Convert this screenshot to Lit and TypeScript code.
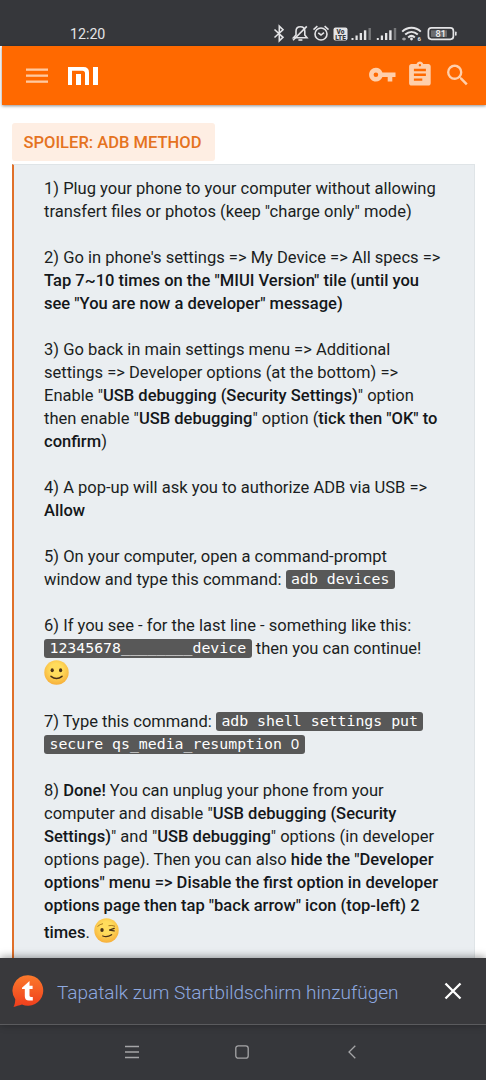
import { LitElement, html, css, svg } from "lit";
import { customElement, property } from "lit/decorators.js";

const ico = (w: number, h: number, body: unknown, vb = `0 0 ${w} ${h}`) =>
  html`<svg width=${w} height=${h} viewBox=${vb} fill="none">${body}</svg>`;

@customElement("status-bar")
class StatusBar extends LitElement {
  static styles = css`
    :host { display: flex; justify-content: space-between; height: 46px; box-sizing: border-box;
      padding: 24px 27px 0 70px; background: #36373b; color: #e4e4e6; font-size: 14.2px; line-height: 21px; }
    .icons { display: flex; height: 20px; }
    svg { display: block; }
    text { font-family: Roboto, sans-serif; }
  `;
  signal() {
    return svg`<g fill="#e4e4e6"><rect x="0" y="14" width="2" height="2"/><rect x="4" y="11.5" width="2.2" height="4.5"/><rect x="8.2" y="9" width="2.3" height="7"/><rect x="12.4" y="6.3" width="2.4" height="9.7"/><rect x="17" y="4" width="2.4" height="12" fill="#77787b"/></g>`;
  }
  render() {
    return html`<span>12:20</span>
      <div class="icons">${ico(186, 20, svg`
        <path d="M1.5 5.500 10 13.300 6.300 16.900V2.100L10 5.800 1.500 13.500" stroke="#e4e4e6" stroke-width="1.600"/>
        <g stroke="#e4e4e6" stroke-width="1.600">
          <path d="M20.500 13.800h13.500l-2.200-2.800V7.200c0-3-2-4.400-4.400-4.400s-4.400 1.400-4.400 4.400V11z"/>
          <path d="M20 16.200 33.800 2.400"/><path d="M25.400 16h4"/>
          <circle cx="48" cy="10" r="6"/><path d="M45.200 8.800 48 11l3-2.400M40.500 5.600 44.400 2.200M55.500 5.600 51.600 2.200"/>
        </g>
        <rect x="60.500" y="3.500" width="14" height="13" rx="2" fill="#e4e4e6"/>
        <text x="67.500" y="9.500" font-size="6.500" font-weight="900" text-anchor="middle" fill="#36373b">Vo</text>
        <text x="67.500" y="15.500" font-size="6.500" font-weight="900" text-anchor="middle" fill="#36373b">LTE</text>
        <g transform="translate(78.500 0)">${this.signal()}</g>
        <g transform="translate(103.800 0)">${this.signal()}</g>
        <g stroke="#e4e4e6" stroke-width="2">
          <path d="M129.200 7.600c5.400-5.200 13.200-5.200 18.600 0M132.200 10.600c3.800-3.400 8.800-3.400 12.600 0M135.200 13.400c2-1.800 4.600-1.800 6.600 0"/>
        </g>
        <circle cx="138.500" cy="15" r="1.400" fill="#e4e4e6"/>
        <path d="M129 15h4M131 13.500v3" stroke="#c4c4c6"/>
        <text x="144.500" y="17" font-size="6" font-weight="700" fill="#e4e4e6">6</text>
        <rect x="155.400" y="3.900" width="25" height="11.400" rx="3" stroke="#e4e4e6" stroke-width="1.700"/>
        <rect x="158" y="6.300" width="16" height="6.600" fill="#6b6c6f"/>
        <rect x="182" y="7.400" width="1.600" height="4.400" rx=".8" fill="#e4e4e6"/>
        <text x="167.700" y="12.900" font-size="9.200" font-weight="500" text-anchor="middle" fill="#f0f0f0">81</text>
      `)}</div>`;
  }
}

@customElement("nav-header")
class NavHeader extends LitElement {
  static styles = css`
    :host { display: flex; align-items: center; height: 59px; margin-left: 2px; padding: 0 17px 0 24px;
      background: #ff6900; box-sizing: border-box; box-shadow: 0 1px 3px rgba(0, 0, 0, .45); }
    svg { display: block; }
    .logo { margin-left: 20px; }
    .grow { flex: 1; }
    .tools { padding-bottom: 3px; }
  `;
  render() {
    return html`${ico(22, 16, svg`<g fill="#ffc9a0"><rect y=".5" width="22" height="2.300"/><rect y="6.500" width="22" height="2.300"/><rect y="12.500" width="22" height="2.300"/></g>`)}
      <div class="logo">${ico(31, 18, svg`<g fill="#fff"><path d="M0 0h15.500q5.500 0 5.500 5.500V18h-4V6.300q0-2.600-2.600-2.600H4V18H0z"/><rect x="8" y="7" width="5" height="11"/><rect x="25" width="5" height="18"/></g>`)}</div>
      <span class="grow"></span>
      <div class="tools">${ico(100, 28, svg`
        <path fill="#ffcfab" d="M13.400 12.400C12.500 9.700 9.900 7.800 6.900 7.800 3.100 7.800.1 10.900.1 14.700s3 6.900 6.800 6.900c3 0 5.500-1.900 6.500-4.600h5.300v4.500h4.600V17H26.500v-4.600zM6.900 17a2.300 2.300 0 1 1 0-4.600 2.300 2.300 0 0 1 0 4.600z"/>
        <path fill="#ffcfab" transform="translate(36.500 .4) scale(1.200)" d="M19 3h-4.180C14.400 1.840 13.300 1 12 1c-1.300 0-2.400.84-2.820 2H5c-1.100 0-2 .9-2 2v14c0 1.100.9 2 2 2h14c1.100 0 2-.9 2-2V5c0-1.100-.9-2-2-2zm-7 0c.55 0 1 .45 1 1s-.45 1-1 1-1-.45-1-1 .45-1 1-1zm2 14H7v-2h7v2zm3-4H7v-2h10v2zm0-4H7V7h10v2z"/>
        <path fill="#ffcfab" transform="translate(74.500 1) scale(1.180)" d="M15.500 14h-.79l-.28-.27A6.471 6.471 0 0 0 16 9.500 6.500 6.500 0 1 0 9.500 16c1.610 0 3.090-.59 4.230-1.570l.27.28v.79l5 4.990L20.490 19l-4.990-5zm-6 0C7.010 14 5 11.990 5 9.500S7.010 5 9.500 5 14 7.010 14 9.500 11.990 14 9.500 14z"/>
      `)}</div>`;
  }
}

@customElement("emoji-face")
class EmojiFace extends LitElement {
  @property({ type: Boolean }) wink = false;
  static styles = css`
    :host { display: inline-block; width: 25px; height: 25px; vertical-align: -5px; }
    svg { display: block; }
  `;
  render() {
    return ico(25, 25, svg`
      <defs><radialGradient id="g" cx=".5" cy=".38" r=".62"><stop offset=".4" stop-color="#ffdc5c"/><stop offset="1" stop-color="#f7b03b"/></radialGradient></defs>
      <circle cx="12.500" cy="12.500" r="12.200" fill="url(#g)"/>
      ${this.wink
        ? svg`<ellipse cx="8" cy="12" rx="1.700" ry="1.900" fill="#493018"/><path d="M3.500 8.500q2.500-2.300 5.500-2.800M14.500 7.700q3.500-.8 6.500.6" stroke="#a0701c" stroke-width=".9"/><path d="M20.200 10.300l-5 1.900 5 .7M8.800 18q4.500 1.600 8.800-1.300" stroke="#493018" stroke-width="1.300" stroke-linecap="round"/>`
        : svg`<ellipse cx="8.200" cy="10.200" rx="1.600" ry="2" fill="#493018"/><ellipse cx="16.600" cy="10.200" rx="1.600" ry="2" fill="#493018"/><path d="M7 16.300q5.500 4.400 11 0" stroke="#493018" stroke-width="1.500" stroke-linecap="round"/>`}`);
  }
}

@customElement("install-banner")
class InstallBanner extends LitElement {
  static styles = css`
    :host { display: flex; align-items: center; height: 67px; box-sizing: border-box; padding: 0 24px 0 12px;
      background: #39393c; border-bottom: 1px solid #5b5b5e; box-shadow: 0 -1px 8px rgba(0, 0, 0, .4); position: relative; }
    svg { display: block; }
    .label { flex: 1; margin-left: 13px; font-size: 19px; font-weight: 300; color: #8ea9e0; white-space: nowrap; padding-top: 2px; }
  `;
  render() {
    return html`${ico(32, 34, svg`
        <defs><linearGradient id="t" x1="0" y1="0" x2="0" y2="1"><stop stop-color="#fb7a2c"/><stop offset="1" stop-color="#ef3d1c"/></linearGradient></defs>
        <path fill="url(#t)" d="M16.300 1.200a15.300 15.300 0 1 1-6.300 29.400C7 31.500 4 32.500 1.500 33c1-2 1.700-4.500 1.800-7.800A15.300 15.300 0 0 1 16.300 1.200z"/>
        <path fill="#fff" d="M17.500 7v4.800h3.100v3.200h-3.100v6.500q0 1.400 1.400 1.400h1.900v3.500h-3.900q-4.100 0-4.100-4.200V15H10v-1.200z"/>`)}
      <span class="label">Tapatalk zum Startbildschirm hinzufügen</span>
      ${ico(18, 18, svg`<path d="M1.500 1.500l15 15M16.500 1.500l-15 15" stroke="#fff" stroke-width="2.300"/>`)}`;
  }
}

@customElement("system-nav")
class SystemNav extends LitElement {
  static styles = css`
    :host { display: flex; align-items: center; height: 55px; box-sizing: border-box;
      padding: 0 0 1px 125px; background: #36373b; }
    svg { display: block; }
    .home { margin: 0 99.500px 0 95.500px; }
  `;
  render() {
    return html`${ico(14, 14, svg`<path d="M0 1.500h14M0 7h14M0 12.500h14" stroke="#a5a5a7" stroke-width="1.300"/>`)}
      <div class="home">${ico(14, 14, svg`<rect x=".8" y=".8" width="12.400" height="12.400" rx="2.500" stroke="#a5a5a7" stroke-width="1.300"/>`)}</div>
      ${ico(8, 14, svg`<path d="M7.300.7 1 7l6.300 6.300" stroke="#a5a5a7" stroke-width="1.300"/>`)}`;
  }
}

@customElement("app-root")
class AppRoot extends LitElement {
  static styles = css`
    :host { display: flex; flex-direction: column; height: 1080px; overflow: hidden; background: #fff;
      font-family: Roboto, sans-serif; color: #1b1e22; }
    status-bar, nav-header, install-banner, system-nav { flex: none; }
    main { flex: 1; min-height: 0; overflow: hidden; padding: 18px 11px 0 12px; }
    .tab { display: flex; width: 203px; height: 38px; align-items: center; justify-content: center; box-sizing: border-box;
      background: #feeee3; border-radius: 3px; color: #e5731f; font-size: 16.550px; font-weight: 500; white-space: nowrap; padding-right: 2px; }
    .card { margin-top: 3px; height: 820px; box-sizing: border-box; padding: 12px 0 0 30px; background: #eaeef1;
      border: 1px solid #dfe4e7; border-left: 2px solid #e0702a; font-size: 16.540px; line-height: 23px; }
    .p { margin-bottom: 23px; white-space: nowrap; }
    .l { height: 23px; }
    .l.face { height: 27px; }
    .l.wink { height: 32px; line-height: 32px; }
    b { font-weight: 500; color: #14171a; }
    code { display: inline-block; height: 19px; line-height: 18px; padding: 0 5.500px; border-radius: 3px; background: #585858;
      color: #fff; font-family: "DejaVu Sans Mono", monospace; font-size: 14.850px; vertical-align: top; margin-top: 2px; }
    .zero { font-family: "Noto Sans", sans-serif; line-height: 1; }
    .blank { position: relative; top: -1px; }
  `;
  render() {
    return html`<status-bar></status-bar><nav-header></nav-header>
      <main>
        <div class="tab">SPOILER: ADB METHOD</div>
        <div class="card">
          <div class="p"><div class="l">1) Plug your phone to your computer without allowing</div>
            <div class="l">transfert files or photos (keep "charge only" mode)</div></div>
          <div class="p"><div class="l">2) Go in phone's settings =&gt; My Device =&gt; All specs =&gt;</div>
            <div class="l"><b>Tap 7~10 times on the "MIUI Version" tile (until you</b></div>
            <div class="l"><b>see "You are now a developer" message)</b></div></div>
          <div class="p"><div class="l">3) Go back in main settings menu =&gt; Additional</div>
            <div class="l">settings =&gt; Developer options (at the bottom) =&gt;</div>
            <div class="l">Enable "<b>USB debugging (Security Settings)</b>" option</div>
            <div class="l">then enable "<b>USB debugging</b>" option (<b>tick then "OK" to</b></div>
            <div class="l"><b>confirm</b>)</div></div>
          <div class="p"><div class="l">4) A pop-up will ask you to authorize ADB via USB =&gt;</div>
            <div class="l"><b>Allow</b></div></div>
          <div class="p"><div class="l">5) On your computer, open a command-prompt</div>
            <div class="l">window and type this command: <code>adb devices</code></div></div>
          <div class="p"><div class="l">6) If you see - for the last line - something like this:</div>
            <div class="l"><code>12345678<span class="blank">________</span>device</code> then you can continue!</div>
            <div class="l face"><emoji-face></emoji-face></div></div>
          <div class="p"><div class="l">7) Type this command: <code>adb shell settings put</code></div>
            <div class="l"><code>secure qs_media_resumption <span class="zero">0</span></code></div></div>
          <div class="p"><div class="l">8) <b>Done!</b> You can unplug your phone from your</div>
            <div class="l">computer and disable "<b>USB debugging (Security</b></div>
            <div class="l"><b>Settings)</b>" and "<b>USB debugging</b>" options (in developer</div>
            <div class="l">options page). Then you can also <b>hide the "Developer</b></div>
            <div class="l"><b>options" menu =&gt; Disable the first option in developer</b></div>
            <div class="l"><b>options page then tap "back arrow" icon (top-left) 2</b></div>
            <div class="l wink"><b>times</b>. <emoji-face wink></emoji-face></div></div>
        </div>
      </main>
      <install-banner></install-banner><system-nav></system-nav>`;
  }
}
